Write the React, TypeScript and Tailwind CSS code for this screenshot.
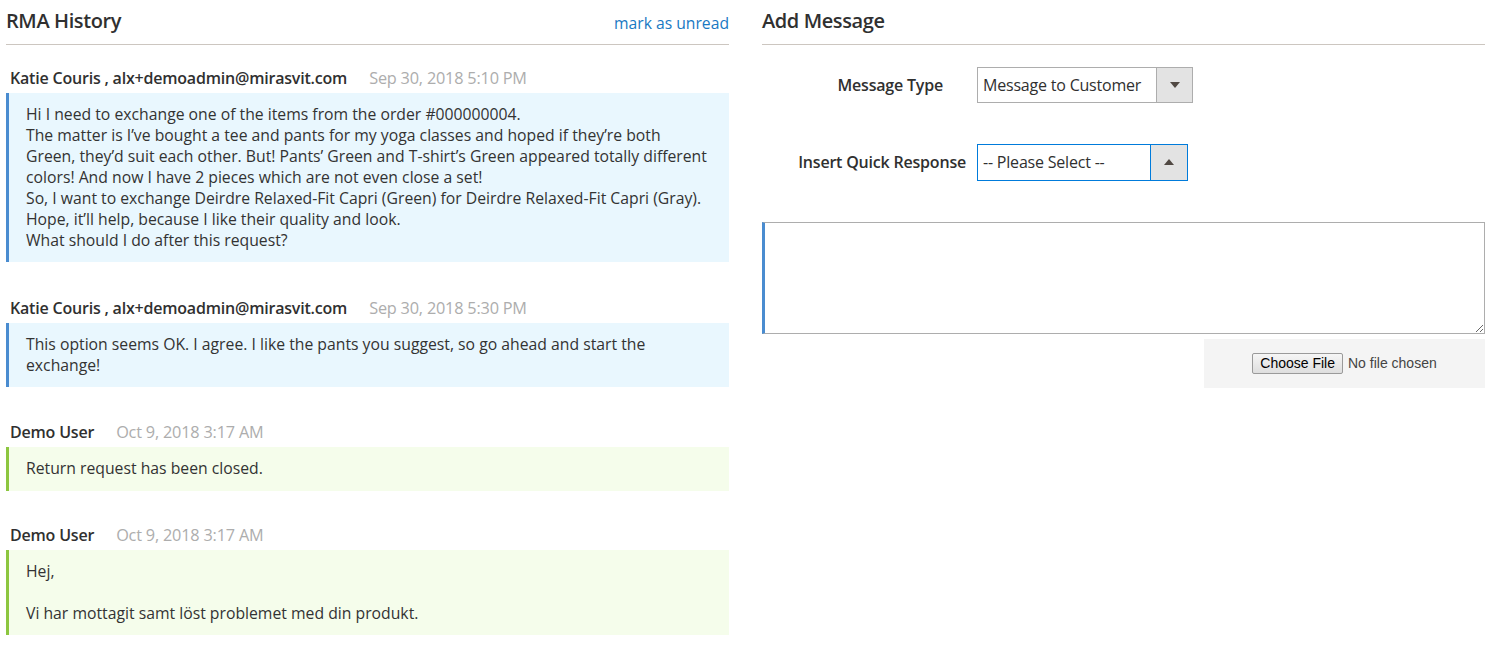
import React from "react";

const font = { fontFamily: '"Open Sans", "Noto Sans", sans-serif' };

function Msg({ name, date, tone, className = "", children }: { name: string; date: string; tone: "blue" | "green"; className?: string; children: React.ReactNode }) {
  return (
    <div className={className}>
      <div className="flex items-baseline h-[21px] pl-[4px]">
        <span className="text-[16px] font-semibold text-[#303030] tracking-[-0.2px]">{name}</span>
        <span className="ml-[22px] text-[16.3px] text-[#adadad] tracking-[-0.2px]">{date}</span>
      </div>
      <div
        className={
          "mt-[6px] border-l-[3px] pl-[17px] pr-4 py-[11px] text-[15.75px] leading-[21px] text-[#333] " +
          (tone === "blue" ? "border-[#4a8cd0] bg-[#e9f7fe]" : "border-[#8cc63f] bg-[#f5fdeb]")
        }
      >
        {children}
      </div>
    </div>
  );
}

export default function App() {
  return (
    <div className="w-[1488px] h-[654px] bg-white flex pl-[6px] pr-[3px] gap-[33px] overflow-hidden" style={font}>
      <div className="w-[723px] flex flex-col">
        <div className="flex items-end justify-between h-[45px] border-b border-[#ccc6c0] pb-[9px]">
          <h2 className="text-[20px] leading-[28px] font-semibold text-[#303030] tracking-[-0.4px]">RMA History</h2>
          <a className="text-[15.7px] text-[#1979c3] leading-[21px] mb-[1px]">mark as unread</a>
        </div>
        <div className="pt-[21px] flex flex-col gap-[32px]">
          <Msg className="mb-[2px]" name="Katie Couris , alx+demoadmin@mirasvit.com" date="Sep 30, 2018 5:10 PM" tone="blue">
            Hi I need to exchange one of the items from the order #000000004.
            <br />
            The matter is I’ve bought a tee and pants for my yoga classes and hoped if they’re both Green, they’d suit each other. But! Pants’ Green and T-shirt’s Green appeared totally different colors! And now I have 2 pieces which are not even close a set!
            <br />
            So, I want to exchange Deirdre Relaxed-Fit Capri (Green) for Deirdre Relaxed-Fit Capri (Gray).
            <br />
            Hope, it’ll help, because I like their quality and look.
            <br />
            What should I do after this request?
          </Msg>
          <Msg className="mb-[1px]" name="Katie Couris , alx+demoadmin@mirasvit.com" date="Sep 30, 2018 5:30 PM" tone="blue">
            This option seems OK. I agree. I like the pants you suggest, so go ahead and start the exchange!
          </Msg>
          <Msg name="Demo User" date="Oct 9, 2018 3:17 AM" tone="green">
            <div className="pb-[1px]">Return request has been closed.</div>
          </Msg>
          <Msg name="Demo User" date="Oct 9, 2018 3:17 AM" tone="green">
            Hej,
            <br />
            <br />
            Vi har mottagit samt löst problemet med din produkt.
          </Msg>
        </div>
      </div>

      <div className="w-[723px] flex flex-col">
        <div className="flex items-end h-[45px] border-b border-[#ccc6c0] pb-[9px]">
          <h2 className="text-[20px] leading-[28px] font-semibold text-[#303030] tracking-[-0.4px]">Add Message</h2>
        </div>
        <div className="flex items-center mt-[22px] h-[36px]">
          <div className="w-[181px] text-right text-[16px] font-semibold text-[#303030] tracking-[-0.2px]">Message Type</div>
          <div className="ml-[34px] w-[216px] h-[36px] flex border border-[#adadad] bg-white">
            <div className="flex-1 flex items-center pl-[5px] text-[16px] text-[#303030] tracking-[-0.2px]">Message to Customer</div>
            <div className="w-[36px] bg-[#e3e3e3] border-l border-[#adadad] flex items-center justify-center">
              <svg width="10" height="6" viewBox="0 0 10 6"><path d="M0 0 L10 0 L5 6 Z" fill="#514943" /></svg>
            </div>
          </div>
        </div>
        <div className="flex items-center mt-[41px] h-[36px]">
          <div className="w-[204px] text-right text-[16px] font-semibold text-[#303030] tracking-[-0.2px]">Insert Quick Response</div>
          <div className="ml-[11px] w-[211px] h-[37px] flex border border-[#007bdb] bg-white">
            <div className="flex-1 flex items-center pl-[5px] text-[16px] text-[#303030] tracking-[-0.2px]">-- Please Select --</div>
            <div className="w-[37px] bg-[#e3e3e3] border-l border-[#007bdb] flex items-center justify-center">
              <svg width="10" height="6" viewBox="0 0 10 6"><path d="M0 6 L10 6 L5 0 Z" fill="#514943" /></svg>
            </div>
          </div>
        </div>
        <textarea className="mt-[42px] w-[723px] h-[112px] border border-[#adadad] border-l-[3px] border-l-[#4a8cd0] bg-white outline-none resize-y block" />
        <div className="flex justify-end mt-[5px]">
          <div className="w-[281px] h-[49px] bg-[#f4f4f4] flex items-center justify-center gap-[5px]" style={{ fontFamily: '"Liberation Sans", Arial, sans-serif' }}>
            <button className="h-[21px] px-[7px] text-[14px] leading-[19px] text-black border border-[#9a9a9a] rounded-[2px] bg-gradient-to-b from-[#f6f6f6] to-[#dedede]">Choose File</button>
            <span className="text-[14px] text-[#444]">No file chosen</span>
          </div>
        </div>
      </div>
    </div>
  );
}
